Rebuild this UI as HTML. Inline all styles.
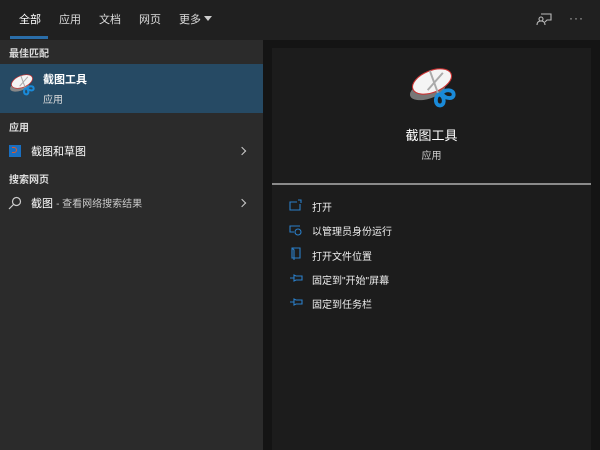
<!DOCTYPE html>
<html><head><meta charset="utf-8"><style>
*{margin:0;padding:0;box-sizing:border-box}
body{width:600px;height:450px;overflow:hidden;background:#141414;font-family:"Liberation Sans","Noto Sans CJK SC",sans-serif;color:#fff;position:relative}
.top{position:absolute;left:0;top:0;width:600px;height:40px;background:#202020}
.tab{position:absolute;top:11px;font-size:11px;color:#ddd}
.left{position:absolute;left:0;top:40px;width:263px;height:410px;background:#2b2b2b}
.hdr{position:absolute;left:9px;font-size:10px;font-weight:bold;color:#ddd}
.sel{position:absolute;left:0;top:64px;width:263px;height:49px;background:#264a64}
.t{position:absolute;font-size:11px;color:#fff}
.card{position:absolute;left:272px;top:48px;width:319px;height:402px;background:#1c1c1c}
.act{position:absolute;left:312px;font-size:10px;color:#eee}
.chev{position:absolute;left:239px;width:6px;height:6px;border-top:1.5px solid #ccc;border-right:1.5px solid #ccc;transform:rotate(45deg)}
</style></head><body>
<div class="top"></div>
<div class="tab" style="left:19px;color:#fff">全部</div>
<div style="position:absolute;left:10px;top:36px;width:38px;height:3px;background:#2a6da8"></div>
<div class="tab" style="left:59px">应用</div>
<div class="tab" style="left:99px">文档</div>
<div class="tab" style="left:139px">网页</div>
<div class="tab" style="left:179px">更多</div>
<div style="position:absolute;left:204px;top:16px;border-left:4px solid transparent;border-right:4px solid transparent;border-top:5px solid #ccc"></div>
<svg style="position:absolute;left:536px;top:11px" width="16" height="16" viewBox="0 0 16 16" fill="none" stroke="#bbb" stroke-width="1.1"><path d="M5 3h10v6h-4l-2 2"/><circle cx="5" cy="8" r="2"/><path d="M1 14c0-3 2-4 4-4s4 1 4 4"/></svg>
<div style="position:absolute;left:569px;top:11px;font-size:12px;color:#bbb;letter-spacing:1px">···</div>
<div class="left"></div>
<div class="hdr" style="top:45px">最佳匹配</div>
<div class="sel"></div>
<svg style="position:absolute;left:8px;top:72px" width="28" height="26" viewBox="0 0 48 44"><ellipse cx="20" cy="24" rx="17" ry="8" transform="rotate(-18 20 24)" fill="#888"/><ellipse cx="24" cy="16" rx="19" ry="10" transform="rotate(-22 24 16)" fill="#f4f4f4" stroke="#c33" stroke-width="1.2"/><path d="M22 6l8 22M34 8L20 24" stroke="#aaa" stroke-width="1.8"/><path d="M30 28c-4 3-3 11 2 10s3-10-2-10zM33 27c3-4 11-4 11 1s-8 4-11-1z" fill="none" stroke="#1a8ad8" stroke-width="3.5"/></svg>
<div class="t" style="left:43px;top:71px;font-weight:bold">截图工具</div>
<div class="t" style="left:43px;top:91px;font-size:10px;color:#ddd">应用</div>
<div class="hdr" style="top:119px">应用</div>
<div style="position:absolute;left:9px;top:145px;width:12px;height:12px;background:#1a6fc0"></div>
<div style="position:absolute;left:12px;top:147px;width:5px;height:6px;border:1.5px solid #e05a2a;border-left:none;border-radius:0 3px 3px 0"></div>
<div class="t" style="left:31px;top:143px">截图和草图</div>
<div class="chev" style="top:148px"></div>
<div class="hdr" style="top:171px">搜索网页</div>
<svg style="position:absolute;left:8px;top:196px" width="14" height="14" viewBox="0 0 14 14" fill="none" stroke="#ccc" stroke-width="1.2"><circle cx="8.5" cy="5.5" r="4"/><path d="M5.5 8.5L1 13"/></svg>
<div class="t" style="left:31px;top:195px">截图 <span style="font-size:10px;color:#ccc">- 查看网络搜索结果</span></div>
<div class="chev" style="top:200px"></div>
<div class="card"></div>
<svg style="position:absolute;left:406px;top:64px" width="52" height="48" viewBox="0 0 48 44"><ellipse cx="20" cy="24" rx="17" ry="8" transform="rotate(-18 20 24)" fill="#777"/><ellipse cx="24" cy="16" rx="19" ry="10" transform="rotate(-22 24 16)" fill="#f4f4f4" stroke="#c33" stroke-width="1"/><path d="M22 6l8 22M34 8L20 24" stroke="#aaa" stroke-width="1.8"/><path d="M30 28c-4 3-3 11 2 10s3-10-2-10zM33 27c3-4 11-4 11 1s-8 4-11-1z" fill="none" stroke="#1a8ad8" stroke-width="3.5"/></svg>
<div style="position:absolute;left:272px;width:319px;top:125px;text-align:center;font-size:13px;color:#fff">截图工具</div>
<div style="position:absolute;left:272px;width:319px;top:147px;text-align:center;font-size:10px;color:#ccc">应用</div>
<div style="position:absolute;left:272px;top:183px;width:319px;height:2px;background:#8a8a8a"></div>
<svg style="position:absolute;left:288px;top:198px" width="16" height="112" viewBox="0 0 16 112" fill="none" stroke="#2a7ec8" stroke-width="1.1">
<path d="M9 4H2v8h10V6M10 2h3v3"/>
<path d="M12 28h-10v6h4"/><circle cx="10" cy="34" r="3"/>
<path d="M4 50h8v10h-8zM4 50l2 2v10"/>
<path d="M2 80h4M6 77v6l2-1h6v-4h-6z"/>
<path d="M2 104h4M6 101v6l2-1h6v-4h-6z"/>
</svg>
<div class="act" style="top:199px">打开</div>
<div class="act" style="top:223px">以管理员身份运行</div>
<div class="act" style="top:248px">打开文件位置</div>
<div class="act" style="top:272px">固定到"开始"屏幕</div>
<div class="act" style="top:296px">固定到任务栏</div>
</body></html>
